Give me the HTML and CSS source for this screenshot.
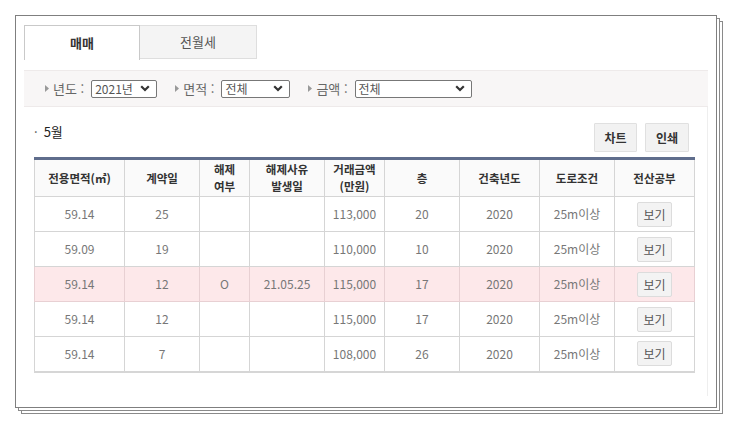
FILE: index.html
```html
<!DOCTYPE html>
<html lang="ko">
<head>
<meta charset="utf-8">
<title>실거래가</title>
<link rel="stylesheet" href="styles.css">
</head>
<body>
<div class="page">
  <div class="frame">
    <div class="tabs">
      <div class="tab active">매매</div>
      <div class="tab">전월세</div>
    </div>
    <div class="filters">
      <div class="group">
        <svg class="tri" width="4" height="7" viewBox="0 0 4 7"><path d="M0 0 L4 3.5 L0 7 Z" fill="#999"/></svg>
        <span class="label">년도 :</span>
        <div class="select s1"><span>2021년</span><svg width="10" height="7" viewBox="0 0 10 7"><path d="M1.2 1.2 L5 5 L8.8 1.2" fill="none" stroke="#333" stroke-width="2.2"/></svg></div>
      </div>
      <div class="group">
        <svg class="tri" width="4" height="7" viewBox="0 0 4 7"><path d="M0 0 L4 3.5 L0 7 Z" fill="#999"/></svg>
        <span class="label">면적 :</span>
        <div class="select s2"><span>전체</span><svg width="10" height="7" viewBox="0 0 10 7"><path d="M1.2 1.2 L5 5 L8.8 1.2" fill="none" stroke="#333" stroke-width="2.2"/></svg></div>
      </div>
      <div class="group">
        <svg class="tri" width="4" height="7" viewBox="0 0 4 7"><path d="M0 0 L4 3.5 L0 7 Z" fill="#999"/></svg>
        <span class="label">금액 :</span>
        <div class="select s3"><span>전체</span><svg width="10" height="7" viewBox="0 0 10 7"><path d="M1.2 1.2 L5 5 L8.8 1.2" fill="none" stroke="#333" stroke-width="2.2"/></svg></div>
      </div>
    </div>
    <div class="content">
      <div class="toolbar">
        <div class="month"><span class="dot">·</span>5월</div>
        <div class="actions">
          <button class="btn">차트</button>
          <button class="btn">인쇄</button>
        </div>
      </div>
      <table class="deals">
        <colgroup>
          <col style="width:90px"><col style="width:75px"><col style="width:50px"><col style="width:75px"><col style="width:60px"><col style="width:75px"><col style="width:80px"><col style="width:75px"><col style="width:80px">
        </colgroup>
        <thead>
          <tr>
            <th>전용면적(㎡)</th><th>계약일</th><th>해제<br>여부</th><th>해제사유<br>발생일</th><th>거래금액<br>(만원)</th><th>층</th><th>건축년도</th><th>도로조건</th><th>전산공부</th>
          </tr>
        </thead>
        <tbody>
          <tr><td>59.14</td><td>25</td><td></td><td></td><td>113,000</td><td>20</td><td>2020</td><td>25m이상</td><td><button class="view">보기</button></td></tr>
          <tr><td>59.09</td><td>19</td><td></td><td></td><td>110,000</td><td>10</td><td>2020</td><td>25m이상</td><td><button class="view">보기</button></td></tr>
          <tr class="cancelled"><td>59.14</td><td>12</td><td>O</td><td>21.05.25</td><td>115,000</td><td>17</td><td>2020</td><td>25m이상</td><td><button class="view">보기</button></td></tr>
          <tr><td>59.14</td><td>12</td><td></td><td></td><td>115,000</td><td>17</td><td>2020</td><td>25m이상</td><td><button class="view">보기</button></td></tr>
          <tr><td>59.14</td><td>7</td><td></td><td></td><td>108,000</td><td>26</td><td>2020</td><td>25m이상</td><td><button class="view">보기</button></td></tr>
        </tbody>
      </table>
    </div>
  </div>
</div>
</body>
</html>
```

FILE: styles.css
```css
html, body {
  margin: 0;
  background: #fff;
}
body {
  font-family: "Noto Sans CJK KR", "Noto Sans", sans-serif;
  color: #333;
}
.page {
  padding: 15px;
}
.frame {
  box-sizing: border-box;
  width: 702px;
  height: 393px;
  border: 1px solid #7f7f7f;
  background: #fff;
  padding: 9px 8px 0 8px;
  box-shadow:
    3px 3px 0 -1px #fff,
    3px 3px 0 0 #8a8a8a,
    6px 6px 0 -1px #fff,
    6px 6px 0 0 #8a8a8a;
}
.tabs {
  display: flex;
  align-items: flex-start;
  height: 35px;
}
.tab {
  box-sizing: border-box;
  display: flex;
  align-items: center;
  justify-content: center;
  font-size: 13px;
  line-height: 16px;
}
.tab.active {
  width: 116px;
  height: 35px;
  border: 1px solid #c9c9c9;
  border-bottom: none;
  background: #fff;
  font-weight: bold;
  color: #333;
}
.tab:not(.active) {
  width: 117px;
  height: 34px;
  border: 1px solid #dedede;
  border-left: none;
  background: #f4f4f4;
  color: #555;
}
.filters {
  box-sizing: border-box;
  margin-top: 10px;
  height: 37px;
  background: #f8f6f6;
  border-top: 1px solid #eeeaea;
  border-bottom: 1px solid #eeeaea;
  display: flex;
  align-items: center;
  padding-left: 21px;
  gap: 18px;
}
.group {
  display: flex;
  align-items: center;
  font-size: 13px;
  color: #666;
}
.tri {
  margin-right: 4px;
}
.label {
  line-height: 16px;
  margin-right: 7px;
}
.select {
  box-sizing: border-box;
  height: 18px;
  border: 1px solid #777;
  border-radius: 2px;
  background: #fff;
  display: flex;
  align-items: center;
  justify-content: space-between;
  padding: 0 6px 0 3px;
  font-size: 12px;
  color: #555;
  line-height: 14px;
}
.s1 { width: 66px; }
.s2 { width: 69px; }
.s3 { width: 117px; }
.content {
  box-sizing: border-box;
  height: 289px;
  padding: 16px 14px 0 10px;
  border-right: 1px solid #eeeeee;
}
.toolbar {
  display: flex;
  align-items: center;
  justify-content: space-between;
  height: 29px;
}
.month {
  margin-left: 0;
  margin-top: -12px;
  font-size: 13px;
  color: #222;
  line-height: 16px;
}
.dot {
  margin-right: 6px;
  color: #555;
}
.actions {
  display: flex;
  gap: 8px;
  margin-right: 4px;
}
.btn {
  box-sizing: border-box;
  width: 44px;
  height: 29px;
  border: 1px solid #e0e0e0;
  background: #f2f2f2;
  font-family: inherit;
  font-size: 12px;
  font-weight: bold;
  color: #333;
  padding: 0;
  border-radius: 1px;
}
.btn:first-child {
  width: 43px;
}
.deals {
  margin-top: 5px;
  width: 660px;
  table-layout: fixed;
  border-collapse: collapse;
  border-top: 3px solid #5f6d8c;
  border-bottom: 2px solid #d6d6d6;
  font-size: 12px;
}
.deals th, .deals td {
  border: 1px solid #d5d5d5;
  text-align: center;
  padding: 0;
}
.deals thead tr {
  height: 38px;
}
.deals th {
  border-top: none;
  background: #fafafa;
  font-weight: bold;
  font-size: 11.5px;
  color: #333;
  line-height: 17px;
}
.deals tbody tr {
  height: 35px;
}
.deals td {
  color: #777;
  line-height: 16px;
}
.deals tr.cancelled td {
  background: #fde8ea;
  border-color: #e8d0d3;
}
.view {
  box-sizing: border-box;
  width: 35px;
  height: 25px;
  border: 1px solid #dcdcdc;
  background: #f3f3f3;
  font-family: inherit;
  font-size: 12px;
  color: #555;
  padding: 0;
  border-radius: 2px;
  vertical-align: middle;
}
```
